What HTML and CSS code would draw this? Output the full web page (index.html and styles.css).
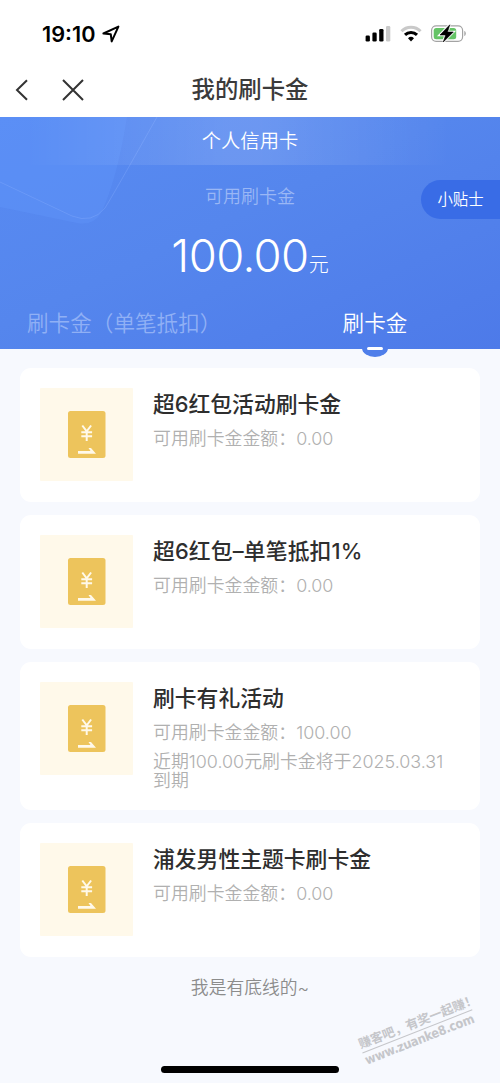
FILE: index.html
```html
<!DOCTYPE html>
<html lang="zh-CN">
<head>
<meta charset="utf-8">
<title>我的刷卡金</title>
<link rel="stylesheet" href="styles.css">
</head>
<body>
<svg class="defs" width="0" height="0">
  <symbol id="coupon" viewBox="0 0 93 93">
    <rect x="28" y="23" width="37.5" height="47" rx="2.5" fill="#edc45c"/>
    <path d="M42.300 37.500l4.400 5.800L51.100 37.500M46.700 43v10M41.300 44.300h10.800M41.300 48.300h10.800" fill="none" stroke="#fff9ea" stroke-width="2"/>
    <path d="M38 63h12.500l-2-3h2.500l5 5.700H38z" fill="#fff9ea"/>
  </symbol>
</svg>
<div class="status">
  <span class="time">19:10</span>
  <svg class="locate" width="18" height="18" viewBox="0 0 18 18"><path d="M1.400 8.500L16.400 1.600 9.700 16.400 8.800 9.300z" fill="none" stroke="#000" stroke-width="2" stroke-linejoin="round"/></svg>
  <svg class="signals" width="104" height="20" viewBox="0 0 104 20">
    <rect x="0.600" y="11.500" width="4.300" height="6" rx="1.300"/><rect x="7.400" y="8.500" width="4.300" height="9" rx="1.300"/><rect x="14.200" y="5" width="4.300" height="12.500" rx="1.300"/><rect x="21" y="2" width="4.300" height="15.500" rx="1.300" fill="#c9c9c9"/>
    <g fill="none" stroke-width="3"><path d="M36.500 7.200a13.200 13.200 0 0 1 19 0" stroke="#c9c9c9"/><path d="M40 10.900a8.500 8.500 0 0 1 12 0" stroke="#000"/></g>
    <path d="M43 14.200a4.500 4.500 0 0 1 6 0l-3 3.300z"/>
    <rect x="66.600" y="1.800" width="31" height="15.500" rx="4.500" fill="#fff" stroke="#a3a3a3" stroke-width="1.200"/>
    <path d="M99.300 7v5c2-.6 2-4.400 0-5z" fill="#a3a3a3"/>
    <rect x="68.700" y="3.900" width="22.500" height="11.300" rx="2.500" fill="#65c466"/>
    <path d="M84.500 1.200L75 11h5.700L78.500 17.500 88 8h-5.700z" stroke="#fff" stroke-width="2.600"/>
    <path d="M84.800 .8L75 11h5.700L78.300 18 88.300 8h-5.800z" stroke="#000" stroke-width=".6"/>
  </svg>
</div>
<div class="nav">
  <svg class="back" width="14" height="22" viewBox="0 0 14 22"><path d="M12 1.200L2 11l10 9.800" fill="none" stroke="#333" stroke-width="2"/></svg>
  <svg class="close" width="22" height="22" viewBox="0 0 22 22"><path d="M1 1l20 20M21 1L1 21" fill="none" stroke="#333" stroke-width="2"/></svg>
  <h1 class="title">我的刷卡金</h1>
</div>
<header class="hero">
  <svg class="shapes" width="170" height="120" viewBox="0 0 170 120"><path d="M0 0H127C120 45 110 78 101 96Q93 109 77 106L0 90z" fill="#6699ff" fill-opacity=".28"/><path d="M0 65L72 99Q92 107 105 91Q112 80 157 0" fill="none" stroke="#8db3ff" stroke-opacity=".3"/></svg>
  <div class="kind">个人信用卡</div>
  <div class="tips">小贴士</div>
  <div class="label">可用刷卡金</div>
  <div class="amount"><span class="number">100.00</span><span class="unit">元</span></div>
  <div class="tabs"><div class="tab">刷卡金（单笔抵扣）</div><div class="tab active">刷卡金<i class="marker"></i></div></div>
</header>
<main class="list">
  <article class="card"><svg class="thumb"><use href="#coupon"/></svg><div class="info"><h2 class="name">超6红包活动刷卡金</h2><p class="line">可用刷卡金金额：0.00</p></div></article>
  <article class="card"><svg class="thumb"><use href="#coupon"/></svg><div class="info"><h2 class="name wide">超6红包–单笔抵扣1%</h2><p class="line">可用刷卡金金额：0.00</p></div></article>
  <article class="card"><svg class="thumb"><use href="#coupon"/></svg><div class="info"><h2 class="name">刷卡有礼活动</h2><p class="line">可用刷卡金金额：100.00</p><p class="line expiry">近期100.00元刷卡金将于2025.03.31<br>到期</p></div></article>
  <article class="card"><svg class="thumb"><use href="#coupon"/></svg><div class="info"><h2 class="name">浦发男性主题卡刷卡金</h2><p class="line">可用刷卡金金额：0.00</p></div></article>
</main>
<footer class="end">我是有底线的~</footer>
<div class="watermark"><div class="slogan">赚客吧，有奖一起赚！</div><div class="site">www.zuanke8.com</div></div>
<div class="home"></div>
</body>
</html>
```
FILE: styles.css
```css
* { box-sizing: border-box; }
body {
  position: relative;
  margin: 0;
  width: 500px;
  height: 1083px;
  overflow: hidden;
  background: #f7f9fe;
  font-family: Inter, "Noto Sans CJK SC", sans-serif;
  font-weight: 300;
}
h1, h2, p { margin: 0; }
.defs { position: absolute; }
.status {
  display: flex;
  align-items: center;
  height: 60px;
  padding: 8px 31px 0 42px;
  background: #fff;
}
.time { width: 60px; font-size: 21.7px; font-weight: 600; letter-spacing: 0; white-space: nowrap; }
.signals { margin-left: auto; }
.nav {
  display: grid;
  grid-template-columns: 14px 22px 1fr;
  column-gap: 33px;
  align-items: center;
  height: 57px;
  padding: 0 15px;
  background: #fff;
}
.title {
  grid-column: 1 / -1;
  grid-row: 1;
  text-align: center;
  color: #3b3b3b;
  font-size: 23.4px;
  font-weight: 500;
  line-height: 59px;
}
.back { grid-column: 1; grid-row: 1; }
.close { grid-column: 2; grid-row: 1; }
.hero {
  position: relative;
  height: 232px;
  background: linear-gradient(155deg, #588bf3, #5586ed 45%, #4d7ae9);
  color: #fff;
  text-align: center;
}
.shapes { position: absolute; left: 0; top: 0; }
.kind {
  position: relative;
  height: 48px;
  line-height: 48px;
  font-size: 19.3px;
  font-weight: 350;
  background: linear-gradient(90deg, transparent 5%, rgba(255,255,255,.13) 45%, rgba(255,255,255,.13) 52%, transparent 90%);
}
.tips {
  position: absolute;
  right: 0;
  top: 63px;
  width: 79px;
  height: 39px;
  border-radius: 20px 0 0 20px;
  background: #396ce6;
  font-size: 15.4px;
  font-weight: 350;
  line-height: 39px;
}
.label { height: 64px; line-height: 64px; font-size: 18px; color: #9ab7f5; font-weight: 350; }
.amount {
  display: flex;
  justify-content: center;
  align-items: baseline;
  height: 66px;
  line-height: 54px;
}
.number { font-size: 45.5px; font-weight: 350; letter-spacing: -0.6px; }
.unit { font-size: 20px; }
.tabs { display: grid; grid-template-columns: 1fr 1fr; height: 54px; line-height: 57px; font-size: 21.6px; }
.tab { color: #90b0f5; text-align: left; padding-left: 27px; white-space: nowrap; font-weight: 350; }
.active { position: relative; color: #fff; text-align: center; padding: 0; }
.marker {
  position: absolute;
  left: 112px;
  bottom: -5px;
  display: flex;
  justify-content: center;
  width: 26px;
  height: 9px;
  border-radius: 0 0 13px 13px / 0 0 9px 9px;
  background: #4f7eea;
}
.marker::before {
  content: "";
  width: 16px;
  height: 3px;
  margin-top: -1px;
  border-radius: 2px;
  background: #fff;
}
.list { display: grid; gap: 13px; padding: 19px 20px 0; }
.card {
  display: flex;
  gap: 20px;
  min-height: 134px;
  padding: 20px 20px 20px;
  border-radius: 11px;
  background: #fff;
}
.thumb { flex: none; width: 93px; height: 93px; border-radius: 1px; background: #fff9ea; }
.info { white-space: nowrap; }
.name { color: #2e2e2e; font-size: 21.8px; font-weight: 500; line-height: 32px; }
.wide { letter-spacing: 0.15px; }
.line { margin-top: 6px; color: #b0b0b0; font-size: 17.9px; font-weight: 350; line-height: 25px; }
.expiry { line-height: 19px; margin-top: 7px; }
.end { margin-top: 19px; text-align: center; color: #8c8c8c; font-size: 17.8px; font-weight: 350; line-height: 24px; }
.watermark {
  position: absolute;
  left: 358px;
  top: 1013px;
  width: 118px;
  color: #c5c6ca;
  font-family: "DejaVu Sans Condensed", "DejaVu Sans", "Noto Sans CJK SC", sans-serif;
  font-weight: 700;
  transform: rotate(-21.500deg);
  white-space: nowrap;
}
.slogan { border-bottom: 1px solid #c5c6ca; font-family: "Noto Sans CJK SC", sans-serif; font-size: 12.6px; line-height: 18px; }
.site { font-size: 12.8px; font-stretch: condensed; letter-spacing: -0.3px; line-height: 16px; }
.home { position: absolute; left: 161px; top: 1066px; width: 178px; height: 7px; border-radius: 4px; background: #000; }
```
